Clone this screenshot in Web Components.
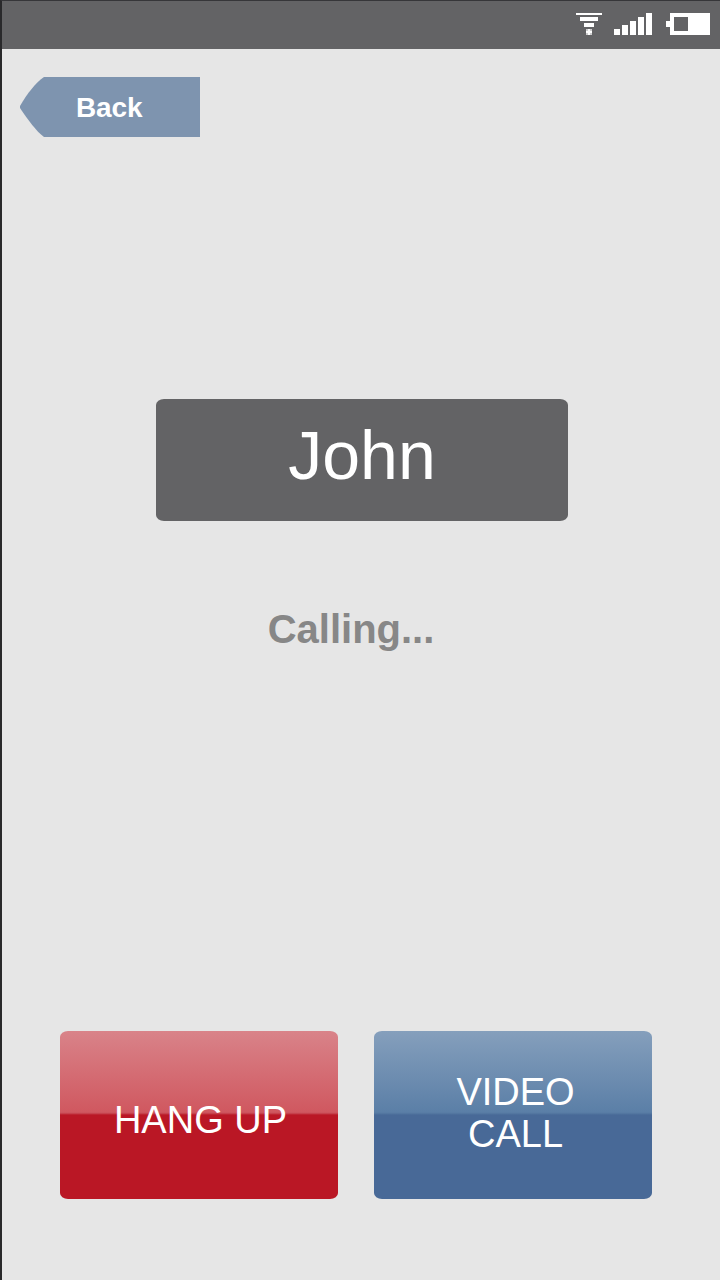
<!DOCTYPE html>
<html lang="en">
<head>
<meta charset="utf-8">
<title>Calling</title>
<style>
html,body{margin:0;height:100%;overflow:hidden}
body{font-family:"Liberation Sans",Arial,Helvetica,sans-serif;background:#e6e6e6}
</style>
</head>
<body>
<call-screen>
  <status-bar slot="status"></status-bar>
  <back-button slot="nav">Back</back-button>
  <caller-name>John</caller-name>
  <call-state>Calling...</call-state>
  <action-button slot="actions" style="--top:#d98389;--mid:#d05860;--edge:#ca4f59;--base:#ba1725">HANG UP</action-button>
  <action-button slot="actions" style="--top:#859fbc;--mid:#5b7fa7;--edge:#577aa3;--base:#486997;--pad:0 0 4px 5px">VIDEO<br>CALL</action-button>
</call-screen>
<script>
function define(name, markup) {
  const template = document.createElement('template');
  template.innerHTML = markup;
  customElements.define(name, class extends HTMLElement {
    constructor() {
      super();
      this.attachShadow({mode: 'open'}).append(template.content.cloneNode(true));
    }
  });
}

define('status-bar', `
<style>
:host{display:flex;justify-content:flex-end;height:48px;background:#636365}
svg{display:block;width:144px;height:48px}
</style>
<svg viewBox="0 0 144 48" fill="#fff" shape-rendering="crispEdges" aria-hidden="true">
  <path d="M0 12h26v2H0zM4 16h18v4H4zM8 22h10v4H8z"/>
  <path fill="#cdcdce" d="M10 28h6v6h-6z"/><path d="M12 28h2v6h-2zM10 30h6v2h-6z"/>
  <path d="M38 28h6v6h-6zM46 24h6v10h-6zM54 20h6v14h-6zM62 16h6v18h-6zM70 12h6v22h-6z"/>
  <path fill-rule="evenodd" d="M94 12h40v22H94v-8h-4v-6h4zM98 16v14h14V16z"/>
</svg>`);

define('back-button', `
<style>
:host{display:grid;width:180px;height:60px;color:#fff;font-weight:bold;font-size:28px;line-height:62px}
svg,span{grid-area:1/1}
svg{display:block}
span{padding-left:56px;height:60px;letter-spacing:-.15px}
</style>
<svg width="180" height="60" viewBox="0 0 180 60" aria-hidden="true"><path fill="#7e94af" d="M24 0H180V60H24C16 54 8 43 0 31V29C7 17 16 5 24 0Z"/></svg>
<span><slot></slot></span>`);

define('caller-name', `
<style>
:host{display:block;box-sizing:border-box;width:412px;height:122px;padding-bottom:9px;background:#636365;border-radius:8px/6px;color:#fff;font-size:68px;line-height:113px;text-align:center}
</style><slot></slot>`);

define('call-state', `
<style>
:host{display:block;color:#878787;font-size:40px;font-weight:bold;line-height:46px;margin:85px 22px 0 0}
</style><slot></slot>`);

define('action-button', `
<style>
:host{display:flex;align-items:center;justify-content:center;box-sizing:border-box;width:278px;height:168px;padding:var(--pad,10px 0 0 3px);border-radius:8px/6px;color:#fff;font-size:38px;line-height:42px;text-align:center;
background:linear-gradient(var(--top),var(--mid) 81px,var(--edge) 82px,var(--base) 84px,var(--base))}
</style><div><slot></slot></div>`);

define('call-screen', `
<style>
:host{display:flex;flex-direction:column;box-sizing:border-box;width:720px;height:1280px;background:#e6e6e6;border-left:2px solid #29292b;border-top:1px solid #363639}
nav{padding:28px 0 0 18px}
main{flex:1;display:flex;flex-direction:column;align-items:center;padding:262px 0 0 2px}
footer{display:flex;gap:36px;padding:0 0 81px 58px}
</style>
<slot name="status"></slot>
<nav><slot name="nav"></slot></nav>
<main><slot></slot></main>
<footer><slot name="actions"></slot></footer>`);
</script>
</body>
</html>
